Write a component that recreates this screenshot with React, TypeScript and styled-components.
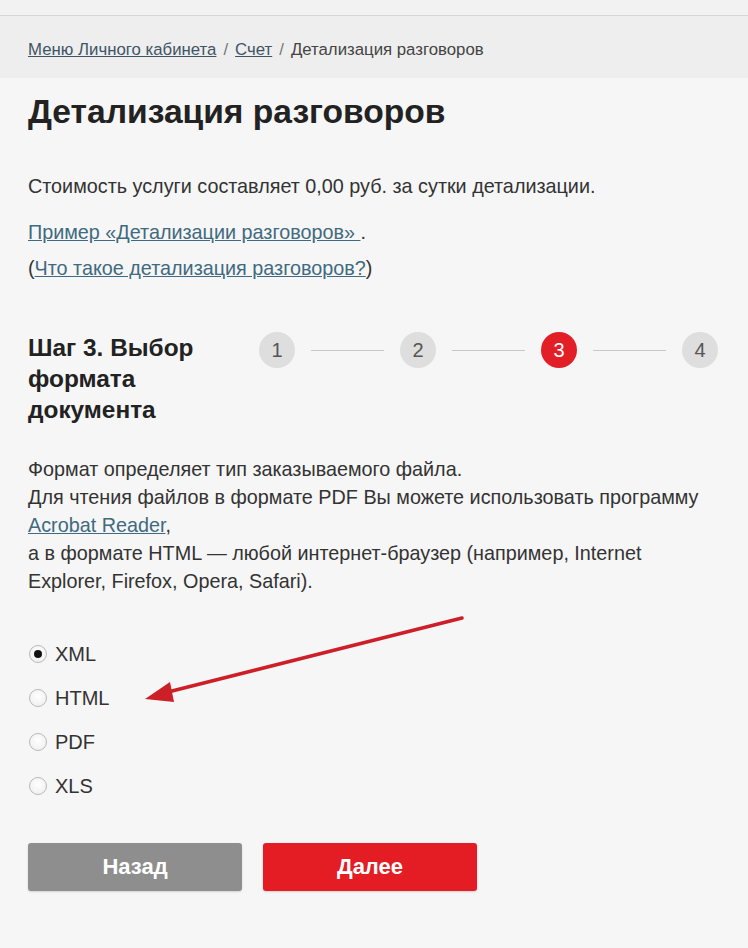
import React, { useState } from "react";
import styled, { createGlobalStyle } from "styled-components";

const GlobalStyle = createGlobalStyle`
  body {
    margin: 0;
    background: #f6f6f6;
    font-family: "Liberation Sans", Arial, sans-serif;
    color: #333;
  }
`;

const Page = styled.div`
  position: relative;
  width: 748px;
  min-height: 948px;
  background: #f6f6f6;
`;

const TopStrip = styled.div`
  height: 15px;
  background: #f2f2f2;
  border-bottom: 1px solid #d6d6d6;
`;

const Crumbs = styled.nav`
  height: 62px;
  box-sizing: border-box;
  padding: 6px 28px 0;
  background: #eeeeee;
  display: flex;
  align-items: center;
  font-size: 16.8px;
  color: #444;
`;

const CrumbLink = styled.a`
  color: #3f5566;
  text-decoration: underline;
`;

const Sep = styled.span`
  margin: 0 7px;
  color: #777;
`;

const Content = styled.main`
  padding: 0 28px;
`;

const Title = styled.h1`
  margin: 16px 0 0;
  font-size: 33.6px;
  line-height: 36px;
  font-weight: bold;
  color: #222;
`;

const Text = styled.p`
  margin: 0;
  font-size: 19.8px;
  line-height: 28px;
  color: #333;
`;

const Cost = styled(Text)`
  margin-top: 42px;
`;

const Links = styled.div`
  margin-top: 14px;
  font-size: 19.8px;
  line-height: 36px;
`;

const TextLink = styled.a`
  color: #3f6a80;
  text-decoration: underline;
`;

const StepRow = styled.section`
  display: flex;
  align-items: flex-start;
  margin-top: 46px;
`;

const StepTitle = styled.h2`
  width: 231px;
  margin: 0;
  font-size: 24.4px;
  line-height: 31px;
  font-weight: bold;
  color: #222;
`;

const Stepper = styled.div`
  display: flex;
  align-items: center;
`;

const Circle = styled.div<{ $active?: boolean }>`
  width: 36px;
  height: 36px;
  border-radius: 50%;
  display: flex;
  align-items: center;
  justify-content: center;
  font-size: 20px;
  background: ${(p) => (p.$active ? "#e21f27" : "#dedede")};
  color: ${(p) => (p.$active ? "#fff" : "#555")};
  flex-shrink: 0;
`;

const Connector = styled.div`
  width: 73px;
  height: 1px;
  margin: 0 16px;
  background: #c8c8c8;
`;

const Info = styled(Text)`
  margin-top: 30px;
`;

const Options = styled.div`
  margin-top: 37px;
  display: flex;
  flex-direction: column;
`;

const Option = styled.label`
  display: flex;
  align-items: center;
  height: 44px;
  font-size: 20px;
  color: #333;
  gap: 8px;
`;

const Radio = styled.input`
  appearance: none;
  margin: 0 0 0 1px;
  width: 18px;
  height: 18px;
  border-radius: 50%;
  border: 1px solid #b9b9b9;
  background: radial-gradient(circle at 50% 40%, #ffffff, #ececec);
  display: grid;
  place-items: center;

  &:checked::after {
    content: "";
    width: 8px;
    height: 8px;
    border-radius: 50%;
    background: #111;
  }
`;

const Buttons = styled.div`
  display: flex;
  gap: 21px;
  margin-top: 35px;
`;

const Button = styled.button<{ $primary?: boolean }>`
  width: 214px;
  height: 48px;
  border: none;
  border-radius: 3px;
  font-family: "Liberation Sans", Arial, sans-serif;
  font-size: 22px;
  font-weight: bold;
  color: #fff;
  background: ${(p) => (p.$primary ? "#e41c24" : "#8e8e8e")};
  box-shadow: 0 1px 2px rgba(0, 0, 0, 0.15);
  cursor: pointer;
`;

const Arrow = styled.svg`
  position: absolute;
  left: 0;
  top: 0;
  pointer-events: none;
`;

const formats = ["XML", "HTML", "PDF", "XLS"];

export default function App() {
  const [format, setFormat] = useState("XML");
  const steps = [1, 2, 3, 4];

  return (
    <Page>
      <GlobalStyle />
      <TopStrip />
      <Crumbs>
        <CrumbLink href="#">Меню Личного кабинета</CrumbLink>
        <Sep>/</Sep>
        <CrumbLink href="#">Счет</CrumbLink>
        <Sep>/</Sep>
        <span>Детализация разговоров</span>
      </Crumbs>
      <Content>
        <Title>Детализация разговоров</Title>
        <Cost>Стоимость услуги составляет 0,00 руб. за сутки детализации.</Cost>
        <Links>
          <div>
            <TextLink href="#">Пример «Детализации разговоров» </TextLink> .
          </div>
          <div>
            (<TextLink href="#">Что такое детализация разговоров?</TextLink>)
          </div>
        </Links>
        <StepRow>
          <StepTitle>
            Шаг 3. Выбор
            <br />
            формата
            <br />
            документа
          </StepTitle>
          <Stepper>
            {steps.map((n, i) => (
              <React.Fragment key={n}>
                <Circle $active={n === 3}>{n}</Circle>
                {i < steps.length - 1 && <Connector />}
              </React.Fragment>
            ))}
          </Stepper>
        </StepRow>
        <Info>
          Формат определяет тип заказываемого файла.
          <br />
          Для чтения файлов в формате PDF Вы можете использовать программу
          <br />
          <TextLink href="#">Acrobat Reader</TextLink>,
          <br />а в формате HTML — любой интернет-браузер (например, Internet
          Explorer, Firefox, Opera, Safari).
        </Info>
        <Options>
          {formats.map((f) => (
            <Option key={f}>
              <Radio
                type="radio"
                name="format"
                checked={format === f}
                onChange={() => setFormat(f)}
              />
              {f}
            </Option>
          ))}
        </Options>
        <Buttons>
          <Button>Назад</Button>
          <Button $primary>Далее</Button>
        </Buttons>
      </Content>
      <Arrow width="748" height="948" viewBox="0 0 748 948">
        <line x1="462" y1="618" x2="164" y2="693" stroke="#cc1f28" strokeWidth="3.5" strokeLinecap="round" />
        <polygon points="145,699 170,682 174,702" fill="#cc1f28" />
      </Arrow>
    </Page>
  );
}
